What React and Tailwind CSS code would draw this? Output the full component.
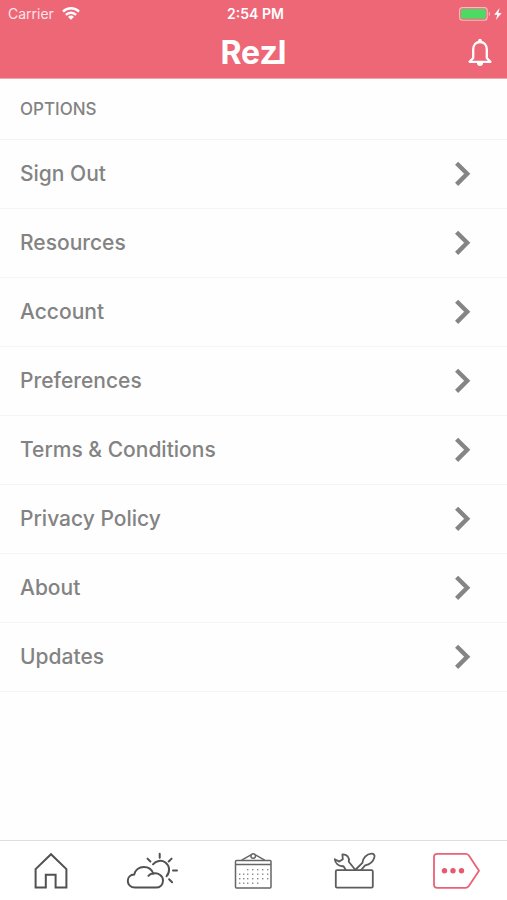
const options = [
  'Sign Out',
  'Resources',
  'Account',
  'Preferences',
  'Terms & Conditions',
  'Privacy Policy',
  'About',
  'Updates',
];

function WifiIcon() {
  return (
    <svg width="18" height="13" viewBox="0 0 18 13" fill="none" stroke="#fff" strokeWidth="2.4" aria-hidden="true">
      <path d="M1 4.6a11.4 11.4 0 0 1 16 0" />
      <path d="M3.9 7.9a7.1 7.1 0 0 1 10.200 0" />
      <path d="M6.100 9.900a3.900 3.900 0 0 1 5.800 0L9 12.800z" fill="#fff" stroke="none" />
    </svg>
  );
}

function BatteryIcon() {
  return (
    <svg width="44" height="14" viewBox="0 0 44 14" aria-hidden="true">
      <rect x="0.6" y="0.6" width="27.6" height="12.6" rx="3" fill="none" stroke="#f9b9c0" strokeWidth="1.1" />
      <rect x="2" y="2" width="24.8" height="9.8" rx="1.6" fill="#4cd964" />
      <path d="M29.8 4.8c1.5.5 1.5 3.9 0 4.4z" fill="#f9b9c0" />
      <path d="M40.6 1L35.2 7.7h3.2L36.8 13l5.8-7.1h-3.3z" fill="#fff" />
    </svg>
  );
}

function BellIcon() {
  return (
    <svg width="26" height="30" viewBox="0 0 26 30" fill="none" stroke="currentColor" strokeWidth="2.3" strokeLinejoin="round" aria-hidden="true">
      <path d="M2.6 23.8l3.600-3.8V11.6C6.200 7 9 4 13 4s6.800 3 6.800 7.6V20l3.600 3.8z" />
      <circle cx="13" cy="2.6" r="1.8" fill="currentColor" stroke="none" />
      <path d="M10 25h6a3 3 0 0 1-6 0z" fill="currentColor" stroke="none" />
    </svg>
  );
}

function Chevron() {
  return (
    <svg className="shrink-0" width="18" height="26" viewBox="0 0 18 26" fill="none" stroke="#858585" strokeWidth="4.4" strokeLinejoin="miter" aria-hidden="true">
      <path d="M3.6 2.2L14.200 12.8L3.6 23.4" />
    </svg>
  );
}

function HomeIcon() {
  return (
    <svg width="34" height="38" viewBox="0 0 34 38" fill="none" stroke="#515151" strokeWidth="2" aria-hidden="true">
      <path d="M1.6 17.1L17 2.2l15.4 14.9v18.4H21.6V22.8h-9.8v12.7H1.6z" />
    </svg>
  );
}

function WeatherIcon() {
  return (
    <svg width="52" height="38" viewBox="0 0 52 38" fill="none" stroke="#515151" strokeWidth="2" strokeLinecap="round" aria-hidden="true">
      <path d="M9 35.600C4.600 35.600 1.800 32.600 1.800 28.900c0-3.500 2.600-6.300 6.400-6.400 1-4.600 4.900-7.600 9.700-7.600 4.400 0 7.900 2.600 9.400 6.600 5.400-.8 9.700 2.300 9.700 7 0 4.300-3 7.100-7.200 7.100z" />
      <path d="M27.300 21.500c-2 .1-3.700.8-4.900 2.300" />
      <path d="M27 12.3c3-3.7 8.500-4.600 12.400-1.800 4.500 3.200 4.800 9.700 1.200 13.700" />
      <path d="M33.700 1.700v4M21.500 6.600l2.900 2.900M45.600 6.600l-2.900 2.900M47 18.500h4M43.100 27.300l3 3" />
    </svg>
  );
}

const calendarDots = [
  [13, 18, 23, 28, 33],
  [5, 9, 13, 18, 23, 28, 33],
  [5, 9, 13, 18, 23, 28, 33],
  [5, 9, 13, 18, 23],
];

function CalendarIcon() {
  return (
    <svg width="38" height="38" viewBox="0 0 38 38" fill="none" stroke="#666" strokeWidth="1.5" aria-hidden="true">
      <rect x="1.500" y="8.500" width="35.500" height="27.500" rx="1" />
      <path d="M1.500 12.500h35.500M7.700 8.200l9.300-5.300M30.700 8.200l-9.300-5.300" />
      <circle cx="19.200" cy="4" r="2.300" />
      {calendarDots.map((row, r) =>
        row.map((x) => (
          <rect key={`${r}-${x}`} x={x} y={17 + r * 4.500} width="1.400" height="1.400" fill="#888" stroke="none" />
        ))
      )}
    </svg>
  );
}

function ToolboxIcon() {
  return (
    <svg width="44" height="38" viewBox="0 0 44 38" fill="none" stroke="#5c5c5c" strokeWidth="1.800" strokeLinejoin="round" strokeLinecap="round" aria-hidden="true">
      <rect x="2.800" y="18.200" width="37" height="17.400" rx="1.200" />
      <path d="M12.800 18l-2.300-3.800c-4.900.4-8.400-3-8.700-7l4.400 2.400 3.600-2.400-.4-4.800c4.600-.2 7.300 3.200 6.400 7.300l5.800 7.300" />
      <path d="M22.200 18l7.200-7.200c.4-4.300 4-8.900 8.900-9.200 2.500-.1 3.700 1.500 3.100 3.700-1.200 4.400-5.200 7.400-9.300 8l-4 4.700" />
    </svg>
  );
}

function MoreIcon() {
  return (
    <svg width="48" height="38" viewBox="0 0 48 38" fill="none" stroke="#e96277" strokeWidth="1.800" strokeLinejoin="round" aria-hidden="true">
      <path d="M5.300 1.800h28.200q2 0 3.200 1.500L47 18.800 36.700 34.300q-1.200 1.500-3.200 1.500H5.300q-3.300 0-3.300-3.300V5.100q0-3.300 3.300-3.300z" />
      <g fill="#e65a70" stroke="none">
        <circle cx="12.500" cy="18.700" r="2.700" />
        <circle cx="21" cy="18.700" r="2.700" />
        <circle cx="29.500" cy="18.700" r="2.700" />
      </g>
    </svg>
  );
}

const tabs = [
  { label: 'Home', Icon: HomeIcon },
  { label: 'Weather', Icon: WeatherIcon },
  { label: 'Calendar', Icon: CalendarIcon },
  { label: 'Toolbox', Icon: ToolboxIcon },
  { label: 'More', Icon: MoreIcon },
];

export default function App() {
  return (
    <div className="flex min-h-screen flex-col bg-[#fefefe] font-['Inter','Liberation_Sans',sans-serif] text-[#838383]">
      <header className="border-b border-[#f3a5ae] bg-[#ee6777] text-white">
        <div className="grid h-[27px] grid-cols-3 items-center pl-2 pr-1 text-sm">
          <div className="flex items-center gap-2 text-[#fde4e7]">
            <span>Carrier</span>
            <WifiIcon />
          </div>
          <time className="text-center text-sm font-semibold">2:54 PM</time>
          <div className="flex justify-end">
            <BatteryIcon />
          </div>
        </div>
        <div className="grid h-[51px] grid-cols-3 items-center px-3.5">
          <h1 className="col-start-2 text-center text-[32px] leading-none font-bold">
            <span className="relative">
              Rezl
              <span className="absolute right-1 bottom-2 h-1 w-2 bg-white" />
            </span>
          </h1>
          <button type="button" aria-label="Notifications" className="justify-self-end">
            <BellIcon />
          </button>
        </div>
      </header>

      <main className="flex-1">
        <h2 className="flex h-[61px] items-center border-b border-[#f3f3f3] px-5 pt-0.5 text-[17px] font-medium">OPTIONS</h2>
        <ul>
          {options.map((option) => (
            <li key={option} className="border-b border-[#f5f5f5]">
              <button type="button" className="flex h-[68px] w-full items-center justify-between pr-9 pl-5 text-left text-[21px] font-medium">
                <span>{option}</span>
                <Chevron />
              </button>
            </li>
          ))}
        </ul>
      </main>

      <nav className="grid h-[60px] grid-cols-5 items-center border-t border-[#dedede] bg-white">
        {tabs.map(({ label, Icon }) => (
          <button key={label} type="button" aria-label={label} className="flex justify-center">
            <Icon />
          </button>
        ))}
      </nav>
    </div>
  );
}
